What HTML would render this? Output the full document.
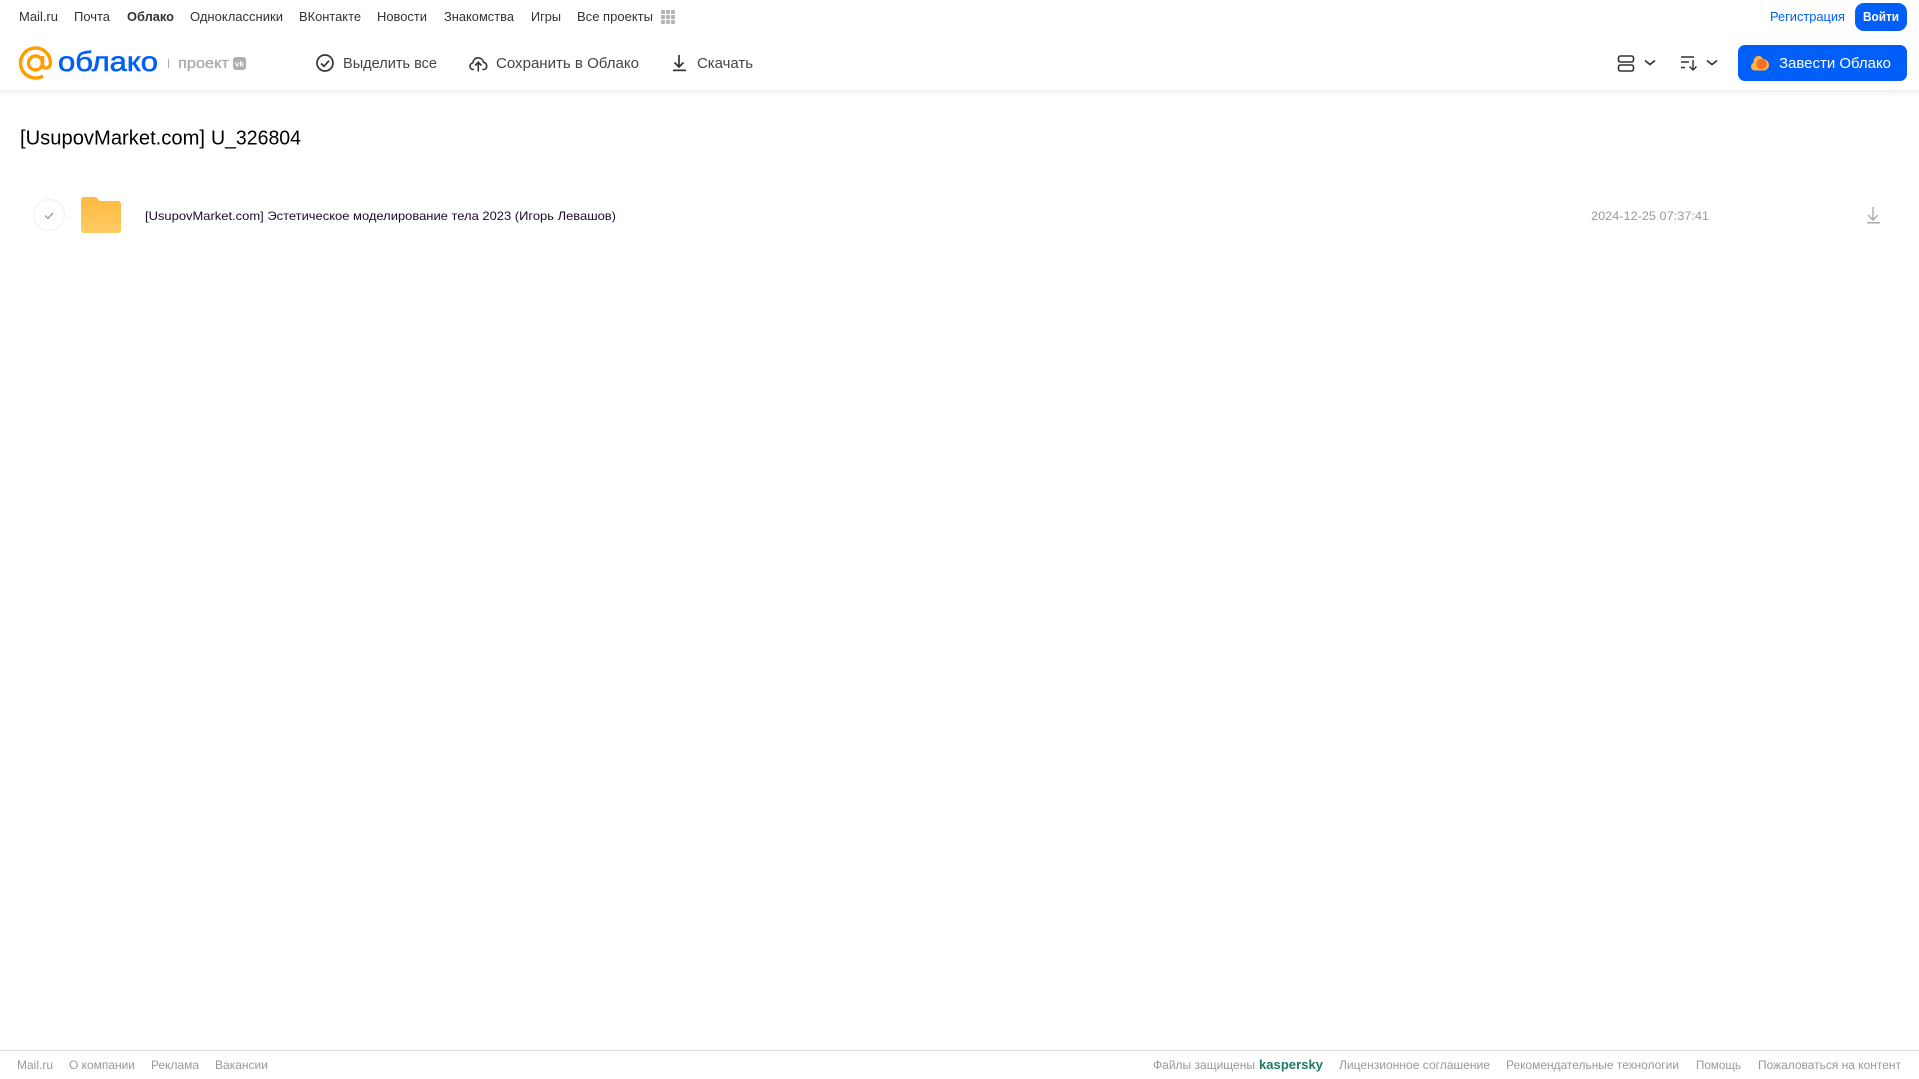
<!DOCTYPE html>
<html lang="ru">
<head>
<meta charset="utf-8">
<title>[UsupovMarket.com] U_326804</title>
<style>
html,body{margin:0;padding:0;background:#fff;width:1919px;height:1079px;overflow:hidden}
svg{display:block;position:absolute;left:0;top:0}
text{font-family:"Liberation Sans",sans-serif}
.n{font-size:12.5px;fill:#333}
.t{font-size:15px;fill:#444}
.f{font-size:12px;fill:#999}
</style>
</head>
<body>
<svg width="1919" height="1079" viewBox="0 0 1919 1079" xmlns="http://www.w3.org/2000/svg">
<defs>
<linearGradient id="sh" x1="0" y1="0" x2="0" y2="1"><stop offset="0" stop-color="#f2f2f2"/><stop offset="1" stop-color="#fff"/></linearGradient>
<linearGradient id="fo" x1="0" y1="0" x2="0" y2="1"><stop offset="0" stop-color="#ffb93f"/><stop offset="1" stop-color="#ffcb66"/></linearGradient>
</defs>
<rect x="0" y="90" width="1919" height="8" fill="url(#sh)"/>

<text class="n" x="19" y="21" textLength="39" lengthAdjust="spacingAndGlyphs">Mail.ru</text>
<text class="n" x="74" y="21" textLength="36" lengthAdjust="spacingAndGlyphs">Почта</text>
<text class="n" x="127" y="21" textLength="47" lengthAdjust="spacingAndGlyphs" font-weight="700">Облако</text>
<text class="n" x="190" y="21" textLength="93" lengthAdjust="spacingAndGlyphs">Одноклассники</text>
<text class="n" x="299" y="21" textLength="62" lengthAdjust="spacingAndGlyphs">ВКонтакте</text>
<text class="n" x="377" y="21" textLength="50" lengthAdjust="spacingAndGlyphs">Новости</text>
<text class="n" x="444" y="21" textLength="70" lengthAdjust="spacingAndGlyphs">Знакомства</text>
<text class="n" x="531" y="21" textLength="30" lengthAdjust="spacingAndGlyphs">Игры</text>
<text class="n" x="577" y="21" textLength="76" lengthAdjust="spacingAndGlyphs">Все проекты</text>
<g fill="#b4b4b4">
<rect x="661" y="10" width="4" height="4" rx="1"/><rect x="666" y="10" width="4" height="4" rx="1"/><rect x="671" y="10" width="4" height="4" rx="1"/>
<rect x="661" y="15" width="4" height="4" rx="1"/><rect x="666" y="15" width="4" height="4" rx="1"/><rect x="671" y="15" width="4" height="4" rx="1"/>
<rect x="661" y="20" width="4" height="4" rx="1"/><rect x="666" y="20" width="4" height="4" rx="1"/><rect x="671" y="20" width="4" height="4" rx="1"/>
</g>

<text class="n" x="1770" y="21" textLength="75" lengthAdjust="spacingAndGlyphs" style="fill:#005ff9">Регистрация</text>
<rect x="1855" y="3" width="52" height="28" rx="9" fill="#005ff9"/>
<text x="1863" y="21" font-size="12.5" font-weight="700" fill="#fff" textLength="36" lengthAdjust="spacingAndGlyphs">Войти</text>

<!-- logo -->
<g fill="none" stroke="#ff9e00" stroke-width="3.400">
<circle cx="35.500" cy="63" r="7"/>
<path d="M42.500 56v8.500c0 5 7.500 5 8-1.500A15 15 0 1 0 43 76"/>
</g>
<text x="58" y="71" font-size="28" fill="#005ff9" stroke="#005ff9" stroke-width=".6" textLength="100" lengthAdjust="spacingAndGlyphs">облако</text>
<rect x="168" y="59" width="1" height="9" fill="#aaa"/>
<text x="178" y="68" font-size="15" fill="#aaa" stroke="#aaa" stroke-width=".3" textLength="51" lengthAdjust="spacingAndGlyphs">проект</text>
<rect x="233" y="57" width="13" height="13" rx="3" fill="#b0b0b0"/>
<text x="235" y="66.500" font-size="7" font-weight="700" fill="#fff" textLength="9" lengthAdjust="spacingAndGlyphs">vk</text>

<!-- actions -->
<circle cx="325" cy="63" r="8" fill="none" stroke="#333" stroke-width="1.700"/>
<path d="M321 63.500l3 2.800 5-5.600" fill="none" stroke="#333" stroke-width="1.700"/>
<text class="t" x="343" y="68" textLength="94" lengthAdjust="spacingAndGlyphs">Выделить все</text>

<path d="M474 69.500h-.8c-2 0-3.200-1.600-3.200-3.300 0-1.700 1.200-3 2.800-3.300.5-3 2.500-5.100 5.400-5.100 2.700 0 4.800 1.900 5.400 4.500 1.900.3 3.100 1.900 3.100 3.900 0 1.800-1.300 3.300-3.300 3.300h-1" fill="none" stroke="#333" stroke-width="1.600"/>
<path d="M478.300 71.500v-9M475.100 65.500l3.200-3.200 3.200 3.200" fill="none" stroke="#333" stroke-width="1.600"/>
<text class="t" x="496" y="68" textLength="143" lengthAdjust="spacingAndGlyphs">Сохранить в Облако</text>

<path d="M679 55v12M674.500 62.500l4.500 4.500 4.500-4.500" fill="none" stroke="#333" stroke-width="1.700"/>
<rect x="673" y="69.500" width="13" height="1.700" fill="#333"/>
<text class="t" x="697" y="68" textLength="56" lengthAdjust="spacingAndGlyphs">Скачать</text>

<!-- right controls -->
<rect x="1618.500" y="56" width="15" height="6" rx="2" fill="none" stroke="#333" stroke-width="1.600"/>
<rect x="1618.500" y="65" width="15" height="6" rx="2" fill="none" stroke="#333" stroke-width="1.600"/>
<path d="M1645 60.500l5 4 5-4" fill="none" stroke="#333" stroke-width="1.700"/>
<path d="M1681 57h13M1681 62h8M1681 67.500h4" fill="none" stroke="#333" stroke-width="1.400"/>
<path d="M1693 60v9.500M1689.500 66.500l3.500 3.500 3.500-3.500" fill="none" stroke="#333" stroke-width="1.400"/>
<path d="M1707 60.500l5 4 5-4" fill="none" stroke="#333" stroke-width="1.700"/>

<rect x="1738" y="45" width="169" height="36" rx="7" fill="#005ff9"/>
<path d="M1755 70.500c-2.500 0-4-1.800-4-4 0-1.800 1-3.200 2.400-3.800-.1-3.500 2-6.700 5.100-6.700 2.200 0 3.700 1.300 4.600 3 2.900 0 5.900 2.500 5.900 6 0 3-2.300 5.500-5 5.500z" fill="#ffb23f"/>
<circle cx="1761.500" cy="64" r="5.200" fill="#f4702a"/>
<text x="1779" y="68" font-size="15" fill="#fff" textLength="112" lengthAdjust="spacingAndGlyphs">Завести Облако</text>

<!-- title -->
<text x="20" y="144.500" font-size="20" fill="#000" textLength="185" lengthAdjust="spacingAndGlyphs">[UsupovMarket.com]</text>
<text x="211" y="144.500" font-size="20" fill="#000" textLength="90" lengthAdjust="spacingAndGlyphs">U_326804</text>

<!-- row -->
<circle cx="49" cy="215" r="15.500" fill="#fff" stroke="#efefef" stroke-width="1"/>
<path d="M45 215.500l3 2.800 5-5.300" fill="none" stroke="#999" stroke-width="1.300"/>
<path d="M81 200c0-1.700 1.300-3 3-3h10c1.500 0 2.500.5 3.500 1.500l2.500 2.500h18c1.700 0 3 1.300 3 3v26c0 1.700-1.300 3-3 3h-34c-1.700 0-3-1.300-3-3z" fill="url(#fo)"/>
<text x="145" y="220" font-size="12" fill="#1a0a2e" textLength="471" lengthAdjust="spacingAndGlyphs">[UsupovMarket.com] Эстетическое моделирование тела 2023 (Игорь Левашов)</text>
<text x="1591" y="220" font-size="12" fill="#999" textLength="118" lengthAdjust="spacingAndGlyphs">2024-12-25 07:37:41</text>
<path d="M1873 207v13M1868 215l5 5 5-5" fill="none" stroke="#aaa" stroke-width="1.400"/>
<rect x="1867" y="222" width="13" height="1.500" fill="#aaa"/>

<!-- footer -->
<rect x="0" y="1050" width="1919" height="1" fill="#d9d9d9"/>
<text class="f" x="17" y="1069" textLength="36" lengthAdjust="spacingAndGlyphs">Mail.ru</text>
<text class="f" x="69" y="1069" textLength="66" lengthAdjust="spacingAndGlyphs">О компании</text>
<text class="f" x="151" y="1069" textLength="48" lengthAdjust="spacingAndGlyphs">Реклама</text>
<text class="f" x="215" y="1069" textLength="53" lengthAdjust="spacingAndGlyphs">Вакансии</text>
<text class="f" x="1153" y="1069" textLength="102" lengthAdjust="spacingAndGlyphs">Файлы защищены</text>
<text x="1259" y="1069" font-size="13" font-weight="700" fill="#1d7a66" textLength="64" lengthAdjust="spacingAndGlyphs">kaspersky</text>
<text class="f" x="1339" y="1069" textLength="151" lengthAdjust="spacingAndGlyphs">Лицензионное соглашение</text>
<text class="f" x="1506" y="1069" textLength="173" lengthAdjust="spacingAndGlyphs">Рекомендательные технологии</text>
<text class="f" x="1696" y="1069" textLength="45" lengthAdjust="spacingAndGlyphs">Помощь</text>
<text class="f" x="1758" y="1069" textLength="143" lengthAdjust="spacingAndGlyphs">Пожаловаться на контент</text>
</svg>
</body>
</html>
